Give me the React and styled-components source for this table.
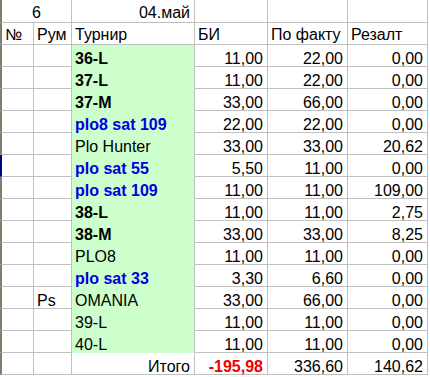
import React from "react";
import styled, { createGlobalStyle } from "styled-components";

const GlobalStyle = createGlobalStyle`
  html, body {
    margin: 0;
    padding: 0;
    background: #ffffff;
  }
  body {
    font-family: "Liberation Sans", Arial, sans-serif;
  }
`;

const GRID = "#c0c0c0";
const GREEN = "#ccffcc";

const Sheet = styled.div`
  display: grid;
  grid-template-columns: 34px 38px 123px 73px 80px 80px;
  width: 428px;
  font-family: "Liberation Sans", Arial, sans-serif;
  font-size: 16px;
  color: #000;
`;

const Cell = styled.div`
  box-sizing: border-box;
  height: ${(p) => (p.$tall ? 23 : 22)}px;
  grid-column: ${(p) => (p.$span ? `span ${p.$span}` : "auto")};
  display: flex;
  align-items: flex-end;
  justify-content: ${(p) =>
    p.$align === "right" ? "flex-end" : p.$align === "center" ? "center" : "flex-start"};
  padding: 0 ${(p) => (p.$align === "right" ? 4 : 3)}px ${(p) => (p.$head ? 2 : 0)}px 3px;
  line-height: 15px;
  white-space: nowrap;
  overflow: visible;
  background: ${(p) => p.$fill || "transparent"};
  border-right: 1px solid ${GRID};
  border-bottom: 1px solid ${(p) => p.$fill || GRID};
  border-left: ${(p) => (p.$first ? `2px solid ${p.$marked ? "#000080" : "#7f7f6e"}` : "none")};
  font-weight: ${(p) => (p.$bold ? 700 : 400)};
  color: ${(p) => p.$color || "#000"};
`;

const rows = [
  { name: "36-L", style: "bold", bi: "11,00", fact: "22,00", res: "0,00" },
  { name: "37-L", style: "bold", bi: "11,00", fact: "22,00", res: "0,00" },
  { name: "37-M", style: "bold", bi: "33,00", fact: "66,00", res: "0,00" },
  { name: "plo8 sat 109", style: "blue", bi: "22,00", fact: "22,00", res: "0,00" },
  { name: "Plo Hunter", style: "plain", bi: "33,00", fact: "33,00", res: "20,62" },
  { name: "plo sat 55", style: "blue", bi: "5,50", fact: "11,00", res: "0,00", marked: true },
  { name: "plo sat 109", style: "blue", bi: "11,00", fact: "11,00", res: "109,00" },
  { name: "38-L", style: "bold", bi: "11,00", fact: "11,00", res: "2,75" },
  { name: "38-M", style: "bold", bi: "33,00", fact: "33,00", res: "8,25" },
  { name: "PLO8", style: "plain", bi: "11,00", fact: "11,00", res: "0,00" },
  { name: "plo sat 33", style: "blue", bi: "3,30", fact: "6,60", res: "0,00" },
  { name: "OMANIA", style: "plain", room: "Ps", bi: "33,00", fact: "66,00", res: "0,00" },
  { name: "39-L", style: "plain", bi: "11,00", fact: "11,00", res: "0,00" },
  { name: "40-L", style: "plain", bi: "11,00", fact: "11,00", res: "0,00" },
];

export default function App() {
  return (
    <>
      <GlobalStyle />
      <Sheet>
        <Cell $first $span={2} $align="center" $tall $head>6</Cell>
        <Cell $align="right" $tall $head>04.май</Cell>
        <Cell $tall $head />
        <Cell $tall $head />
        <Cell $tall $head />

        <Cell $first $head>№</Cell>
        <Cell $head>Рум</Cell>
        <Cell $head>Турнир</Cell>
        <Cell $head>БИ</Cell>
        <Cell $head>По факту</Cell>
        <Cell $head>Резалт</Cell>

        {rows.map((r, i) => (
          <React.Fragment key={i}>
            <Cell $first $marked={r.marked} />
            <Cell>{r.room || ""}</Cell>
            <Cell
              $fill={GREEN}
              $bold={r.style !== "plain"}
              $color={r.style === "blue" ? "#0000e0" : "#000"}
            >
              {r.name}
            </Cell>
            <Cell $align="right">{r.bi}</Cell>
            <Cell $align="right">{r.fact}</Cell>
            <Cell $align="right">{r.res}</Cell>
          </React.Fragment>
        ))}

        <Cell $first />
        <Cell />
        <Cell $align="right">Итого</Cell>
        <Cell $align="right" $bold $color="#ee0000">-195,98</Cell>
        <Cell $align="right">336,60</Cell>
        <Cell $align="right">140,62</Cell>
      </Sheet>
    </>
  );
}
